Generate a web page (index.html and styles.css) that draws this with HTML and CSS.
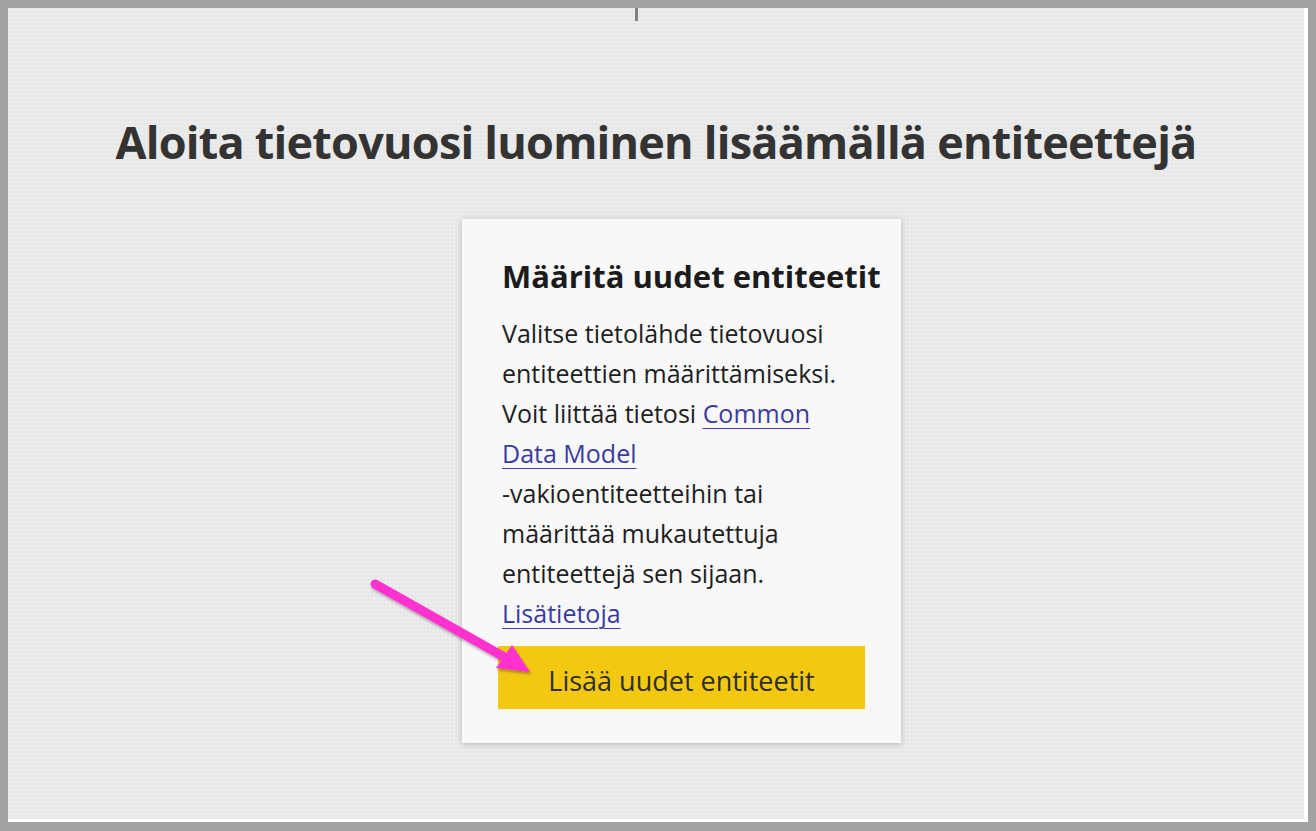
FILE: index.html
```html
<!DOCTYPE html>
<html lang="fi">
<head>
<meta charset="utf-8">
<title>Tietovuo</title>
<link rel="stylesheet" href="styles.css">
</head>
<body>
<div class="frame">
  <main class="canvas">
    <span class="tick"></span>
    <h1 class="heading">Aloita tietovuosi luominen lisäämällä entiteettejä</h1>
    <section class="card">
      <h2 class="card-title">Määritä uudet entiteetit</h2>
      <p class="card-text">Valitse tietolähde tietovuosi entiteettien määrittämiseksi. Voit liittää tietosi <a class="link" href="#">Common Data Model</a> <span class="nobr">-vakioentiteetteihin</span> tai määrittää mukautettuja entiteettejä sen sijaan. <a class="link" href="#">Lisätietoja</a></p>
      <button class="add-btn" type="button">Lisää uudet entiteetit</button>
    </section>
    <svg class="arrow" width="190" height="120" viewBox="0 0 190 120" aria-hidden="true">
      <defs>
        <filter id="sh" x="-20%" y="-20%" width="140%" height="140%">
          <feDropShadow dx="1" dy="2" stdDeviation="1.5" flood-color="#000" flood-opacity="0.35"/>
        </filter>
      </defs>
      <g filter="url(#sh)">
        <line x1="15" y1="14" x2="146" y2="88" stroke="#ff30d0" stroke-width="9" stroke-linecap="round"/>
        <polygon points="136,98 152,75 170,102" fill="#ff30d0"/>
      </g>
    </svg>
  </main>
</div>
</body>
</html>
```

FILE: styles.css
```css
html, body {
  margin: 0;
  padding: 0;
}

body {
  width: 1316px;
  height: 831px;
  overflow: hidden;
  font-family: "Open Sans", "Noto Sans", sans-serif;
}

.frame {
  box-sizing: border-box;
  width: 1316px;
  height: 831px;
  background: #a3a3a3;
  padding: 8px 8px 9px 8px;
}

.canvas {
  position: relative;
  box-sizing: border-box;
  width: 1300px;
  height: 814px;
  border-right: 4px solid #ffffff;
  border-bottom: 3px solid #ffffff;
  background-color: #e8e8e8;
  background-image: radial-gradient(circle at 2px 2px, #eeeeee 0.9px, transparent 1.3px);
  background-size: 4px 4px;
  display: flex;
  flex-direction: column;
  align-items: center;
  padding-top: 104px;
}

.tick {
  position: absolute;
  left: 627px;
  top: 0;
  width: 3px;
  height: 13px;
  background: #808080;
  filter: blur(0.5px);
}

.heading {
  margin: 0;
  font-size: 45px;
  line-height: 60px;
  font-weight: 700;
  color: #333333;
  letter-spacing: -0.78px;
  white-space: nowrap;
}

.card {
  box-sizing: border-box;
  width: 439px;
  height: 524px;
  margin-top: 47px;
  margin-left: 51px;
  background: #f8f8f8;
  box-shadow: 0 1px 6px rgba(0, 0, 0, 0.22);
  padding: 37px 36px 33px 36px;
  display: flex;
  flex-direction: column;
}

.card-title {
  margin: 0 0 0 4px;
  font-size: 31px;
  line-height: 40px;
  font-weight: 700;
  color: #1b1b1b;
  white-space: nowrap;
  letter-spacing: 0;
}

.card-text {
  margin: 17px 0 0 4px;
  font-size: 25px;
  line-height: 40px;
  color: #1e1e1e;
}

.nobr {
  white-space: nowrap;
}

.link {
  color: #3b3ba0;
  text-decoration: underline;
  text-underline-offset: 5px;
  text-decoration-thickness: 1px;
}

.add-btn {
  box-sizing: border-box;
  margin-top: 13px;
  height: 63px;
  flex: none;
  border: none;
  background: #f2c811;
  color: #2e2e2e;
  font-family: inherit;
  font-size: 27px;
  line-height: 57px;
  padding: 6px 0 0 0;
  cursor: pointer;
}

.arrow {
  position: absolute;
  left: 352px;
  top: 562px;
  overflow: visible;
}
```
